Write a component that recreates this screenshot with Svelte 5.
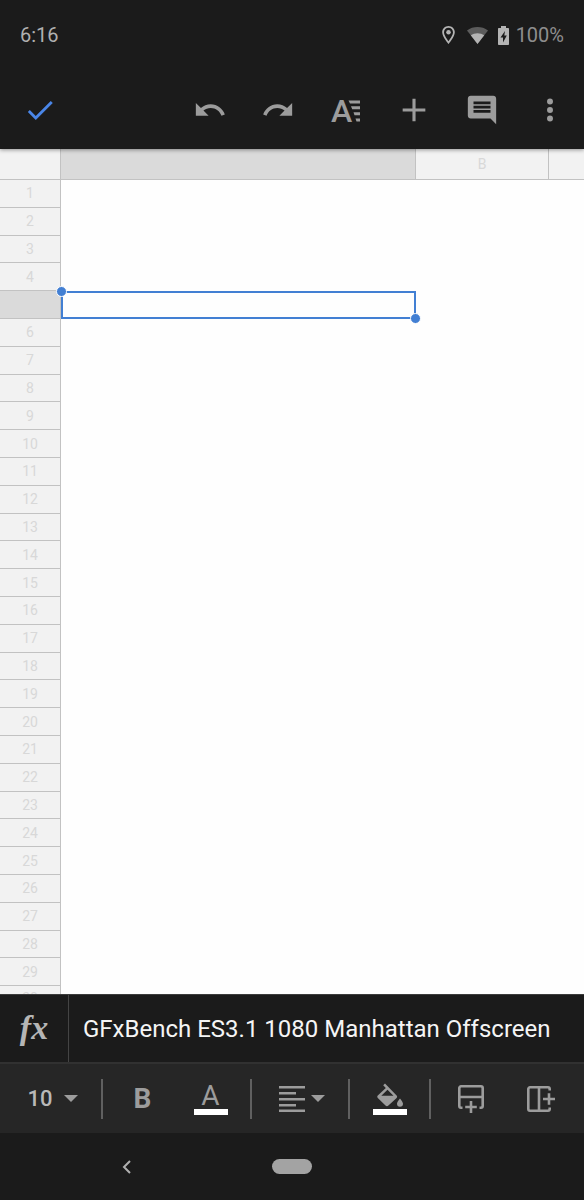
<script>
    let cellText = $state("GFxBench ES3.1 1080 Manhattan Offscreen");
    let fontSize = $state("10");

    const sizes = ["8", "9", "10", "11", "12", "14", "18", "24"];
    const columns = ["A", "B", "C"];
    const rows = Array.from({ length: 30 }, (_, i) => i + 1);

    // the cell that is being edited
    const selected = { row: 5, column: "A" };
</script>

<div class="app">
    <header>
        <div class="status">
            <span class="time">6:16</span>
            <svg class="pin" viewBox="5 2 14 20" aria-hidden="true">
                <path d="M12 2C8.13 2 5 5.13 5 9c0 5.25 7 13 7 13s7-7.75 7-13c0-3.87-3.13-7-7-7zM7 9c0-2.76 2.24-5 5-5s5 2.240 5 5c0 2.880-2.880 7.190-5 9.880C9.920 16.210 7 11.850 7 9z" />
                <circle cx="12" cy="9" r="2.500" />
            </svg>
            <svg class="wifi" viewBox="0 0 21 17" aria-hidden="true">
                <path class="faint" d="M0 3.500C6 -1.100 15 -1.100 21 3.500L10.500 17z" />
                <path d="M3.800 8.300C7.500 5.500 13.500 5.500 17.200 8.300L10.500 17z" />
            </svg>
            <svg class="battery" viewBox="0 0 11 19" aria-hidden="true">
                <path fill-rule="evenodd" d="M3 0h5v2h2.200c.5 0 .8.3.8.8v15.400c0 .5-.3.800-.8.800H.8c-.5 0-.8-.3-.8-.8V2.800C0 2.300.3 2 .8 2H3zM7 5L2.500 11.500H5V16.500L8.800 9.500H6.300z" />
            </svg>
            <span class="level">100%</span>
        </div>

        <div class="actions">
            <button class="done" aria-label="Done">
                <svg viewBox="0 0 24 24"><path d="M9 16.170L4.830 12l-1.420 1.410L9 19 21 7l-1.410-1.410z" /></svg>
            </button>
            <button aria-label="Undo">
                <svg viewBox="0 0 24 24"><path d="M12.500 8c-2.650 0-5.050.990-6.900 2.600L2 7v9h9l-3.620-3.620c1.390-1.160 3.160-1.880 5.120-1.880 3.540 0 6.550 2.310 7.600 5.500l2.370-.780C21.080 11.030 17.150 8 12.500 8z" /></svg>
            </button>
            <button aria-label="Redo">
                <svg viewBox="0 0 24 24"><path d="M18.400 10.600C16.550 8.990 14.150 8 11.500 8c-4.650 0-8.580 3.030-9.960 7.220L3.900 16c1.050-3.190 4.050-5.500 7.600-5.500 1.950 0 3.730.720 5.120 1.880L13 16h9V7l-3.600 3.600z" /></svg>
            </button>
            <button aria-label="Format">
                <svg viewBox="0 0 34 34">
                    <text class="glyph" x="2" y="29">A</text>
                    <path d="M19.500 7.500h11.500v3H21zM22 13.200h9v3h-7.800zM24.500 19.300h6.500v3h-5.500zM26.500 25.500H31v3h-3.500z" />
                </svg>
            </button>
            <button aria-label="Insert">
                <svg viewBox="0 0 24 24"><path d="M10.900 4h2.200v6.900H20v2.200h-6.900V20h-2.200v-6.900H4v-2.200h6.900z" /></svg>
            </button>
            <button aria-label="Comment">
                <svg viewBox="0 0 24 24"><path d="M21.990 4c0-1.100-.890-2-1.990-2H4c-1.100 0-2 .900-2 2v12c0 1.100.900 2 2 2h14l4 4-.010-18zM18 14H6v-2h12v2zm0-3H6V9h12v2zm0-3H6V6h12v2z" /></svg>
            </button>
            <button aria-label="More options">
                <svg viewBox="0 0 24 24">
                    <circle cx="12" cy="6" r="2.100" />
                    <circle cx="12" cy="12" r="2.100" />
                    <circle cx="12" cy="18" r="2.100" />
                </svg>
            </button>
        </div>
    </header>

    <table>
        <thead>
            <tr>
                <th></th>
                {#each columns as column}
                    <th scope="col" class:active={column === selected.column}>
                        {#if column === "B"}{column}{/if}
                    </th>
                {/each}
            </tr>
        </thead>
        <tbody>
            {#each rows as row}
                <tr>
                    <th scope="row" class:active={row === selected.row}>
                        {#if row !== selected.row}{row}{/if}
                    </th>
                    {#each columns as column}
                        <td class:selected={row === selected.row && column === selected.column}></td>
                    {/each}
                </tr>
            {/each}
        </tbody>
    </table>

    <div class="formula">
        <label for="formula">fx</label>
        <input id="formula" type="text" spellcheck="false" bind:value={cellText} />
    </div>

    <div class="format">
        <div class="group size">
            <select aria-label="Font size" bind:value={fontSize}>
                {#each sizes as size}
                    <option value={size}>{size}</option>
                {/each}
            </select>
            <svg class="arrow" viewBox="0 0 14 7" aria-hidden="true"><path d="M0 0h14L7 7z" /></svg>
        </div>
        <div class="group">
            <button class="letter bold" aria-label="Bold">B</button>
            <button class="letter swatch" aria-label="Text colour">A</button>
        </div>
        <div class="group">
            <button class="align" aria-label="Align">
                <svg viewBox="0 0 26 26"><path d="M0 0h26v2.500H0zM0 6h17v2.500H0zM0 12h26v2.500H0zM0 18h17v2.500H0zM0 23.500h26V26H0z" /></svg>
                <svg class="arrow" viewBox="0 0 14 7"><path d="M0 0h14L7 7z" /></svg>
            </button>
        </div>
        <div class="group">
            <button class="swatch" aria-label="Fill colour">
                <svg viewBox="0 0 26 26">
                    <path fill-rule="evenodd" d="M8 .5L6.200 2.300 8.800 4.900.8 12.500c-.7.7-.7 1.700 0 2.400l7.700 7.700c.8.8 2.100.8 2.900 0l8.200-7.700c.7-.7.7-1.700 0-2.400zM10.500 6.800L16.500 12.800H4.300z" />
                    <path d="M23 15.500s-3 3.400-3 5.200a3 3 0 0 0 6 0c0-1.800-3-5.200-3-5.200z" />
                </svg>
            </button>
        </div>
        <div class="group insert">
            <button aria-label="Insert row">
                <svg class="line" viewBox="0 0 26 28">
                    <path d="M4.500 22.800H3a1.700 1.700 0 0 1-1.700-1.700V3A1.700 1.700 0 0 1 3 1.300h20A1.700 1.700 0 0 1 24.700 3v18.100a1.700 1.700 0 0 1-1.700 1.700h-1.500M1.300 12h23.400M13 16v12M7.200 22h11.600" />
                </svg>
            </button>
            <button aria-label="Insert column">
                <svg class="line wide" viewBox="0 0 28 26">
                    <path d="M22.700 4.500V3A1.700 1.700 0 0 0 21 1.300H3A1.700 1.700 0 0 0 1.300 3v20A1.700 1.700 0 0 0 3 24.700h18a1.700 1.700 0 0 0 1.700-1.700v-1.500M12 1.300v23.400M16 13h12M22 7.200v11.600" />
                </svg>
            </button>
        </div>
    </div>

    <nav>
        <button aria-label="Back">
            <svg viewBox="0 0 9 14"><path d="M8 1L2 7l6 6" /></svg>
        </button>
        <button class="home" aria-label="Home"></button>
    </nav>
</div>

<style>
    :global(body) {
        background-color: #1b1b1b;
    }

    .app {
        --dark: #1b1b1b;
        --icon: #9c9c9c;
        --line: #c2c2c2;
        --blue: #427fd3;
        min-height: 100vh;
        display: flex;
        flex-direction: column;
        font-family: Roboto, sans-serif;
        color: var(--icon);
        background-color: var(--dark);
    }

    button, select, input {
        margin: 0;
        padding: 0;
        border: none;
        border-radius: 0;
        background: none;
        color: inherit;
        font-family: inherit;
    }

    button {
        cursor: pointer;
    }

    svg {
        display: block;
        overflow: visible;
        fill: currentColor;
    }

    header {
        position: relative;
        z-index: 1;
        background-color: var(--dark);
        box-shadow: 0 1px 4px rgba(0, 0, 0, 0.4);
    }

    /* status bar */
    .status {
        height: 70px;
        padding: 0 20px;
        display: flex;
        align-items: center;
        font-size: 20px;
    }

    .time {
        margin-right: auto;
        color: #b0b0b0;
    }

    .pin {
        width: 13px;
        height: 18px;
        margin-right: 12px;
        color: #b4b4b4;
    }

    .wifi {
        width: 21px;
        height: 17px;
        margin-right: 10px;
        color: #b4b4b4;
    }

    .faint {
        fill: #5c5c5c;
    }

    .battery {
        width: 11px;
        height: 19px;
        margin-right: 7px;
        color: #b4b4b4;
    }

    .level {
        color: #8e8e8e;
    }

    /* action bar */
    .actions {
        height: 79px;
        padding-left: 6px;
        display: flex;
        align-items: center;
    }

    .actions button {
        width: 68px;
        height: 68px;
        display: grid;
        place-items: center;
    }

    .actions svg {
        width: 34px;
        height: 34px;
    }

    .actions .done {
        margin-right: auto;
        color: #4a86e8;
    }

    .glyph {
        font-size: 32px;
        font-weight: 500;
    }

    /* sheet */
    table {
        flex: 1;
        display: flex;
        flex-direction: column;
        background-color: #fefefe;
    }

    tbody {
        flex: 1;
        display: flex;
        flex-direction: column;
    }

    tr {
        flex: 1 0 24px;
        display: grid;
        grid-template-columns: 61px 355px 133px 1fr;
    }

    /* the last row only peeks out above the formula bar */
    tbody tr:last-child {
        flex: 0 0 8px;
        height: 8px;
        overflow: hidden;
    }

    th, td {
        box-sizing: border-box;
        padding: 0;
    }

    th {
        display: flex;
        align-items: center;
        justify-content: center;
        border-right: 1px solid var(--line);
        border-bottom: 1px solid var(--line);
        background-color: #f2f2f2;
        color: #d8d8d8;
        font-size: 14px;
        font-weight: 400;
        line-height: 24px;
    }

    thead th {
        height: 31px;
    }

    th.active {
        background-color: #dadada;
    }

    thead th:last-child {
        border-right: none;
    }

    tbody tr:last-child th {
        border-bottom: none;
        align-items: flex-start;
    }

    .selected {
        position: relative;
        border: 2px solid var(--blue);
    }

    .selected::before,
    .selected::after {
        content: "";
        position: absolute;
        width: 9px;
        height: 9px;
        border: 1px solid #fff;
        border-radius: 50%;
        background-color: var(--blue);
    }

    .selected::before {
        top: -7px;
        left: -7px;
    }

    .selected::after {
        right: -7px;
        bottom: -7px;
    }

    /* formula bar */
    .formula {
        height: 67px;
        display: flex;
        border-top: 1px solid #3c3c3c;
        border-bottom: 2px solid #313131;
    }

    .formula label {
        width: 68px;
        border-right: 1px solid #444;
        color: #b5b5b5;
        font-family: "Liberation Serif", serif;
        font-size: 34px;
        font-style: italic;
        font-weight: 700;
        line-height: 66px;
        text-align: center;
    }

    .formula input {
        flex: 1;
        min-width: 0;
        padding-left: 14px;
        color: #f5f5f5;
        font-size: 24px;
        outline: none;
    }

    /* format bar */
    .format {
        height: 69px;
        display: grid;
        grid-template-columns: 103fr 149fr 98fr 81fr 153fr;
        align-items: center;
        background-color: #262626;
    }

    .group {
        height: 40px;
        display: flex;
        align-items: center;
        justify-content: center;
        border-right: 2px solid #606060;
    }

    .group:last-child {
        border-right: none;
    }

    .size {
        padding-left: 4px;
    }

    .insert {
        gap: 2px;
        padding-right: 4px;
    }

    .group button {
        width: 68px;
        height: 40px;
        display: flex;
        align-items: center;
        justify-content: center;
    }

    .group svg {
        width: 26px;
        height: 26px;
    }

    .group .arrow {
        width: 14px;
        height: 7px;
    }

    select {
        appearance: none;
        width: 36px;
        color: #b8b8b8;
        font-size: 22px;
        font-weight: 500;
    }

    .group .letter {
        font-size: 28px;
        line-height: 26px;
    }

    .bold {
        font-weight: 700;
    }

    .group .swatch {
        flex-direction: column;
        justify-content: flex-end;
    }

    .swatch::after {
        content: "";
        width: 34px;
        height: 6px;
        margin-bottom: 4px;
        background-color: #fff;
    }

    .group .align {
        gap: 6px;
        padding-left: 4px;
    }

    .group .line {
        height: 28px;
        fill: none;
        stroke: currentColor;
        stroke-width: 2.6;
    }

    .group .wide {
        width: 28px;
        height: 26px;
    }

    /* navigation bar */
    nav {
        height: 67px;
        display: grid;
        grid-template-columns: 1fr 40px 1fr;
        gap: 20px;
        align-items: center;
    }

    nav button {
        height: 40px;
        display: grid;
        place-items: center;
    }

    nav svg {
        width: 9px;
        height: 14px;
        fill: none;
        stroke: #b0b0b0;
        stroke-width: 2;
    }

    nav .home {
        height: 15px;
        border-radius: 8px;
        background-color: #a3a3a3;
    }
</style>
